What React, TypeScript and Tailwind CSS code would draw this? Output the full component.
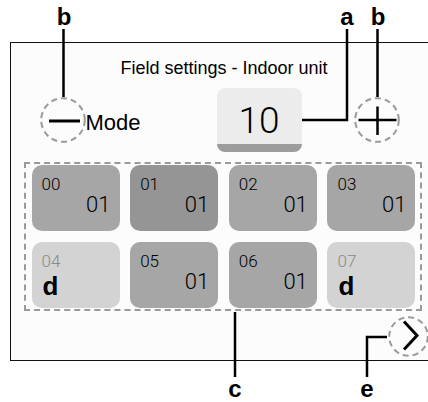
import React from "react";

const tiles = [
  { id: "00", value: "01", bg: "bg-[#a6a6a6]", d: false },
  { id: "01", value: "01", bg: "bg-[#959595]", d: false },
  { id: "02", value: "01", bg: "bg-[#a6a6a6]", d: false },
  { id: "03", value: "01", bg: "bg-[#a6a6a6]", d: false },
  { id: "04", value: "d", bg: "bg-[#d3d3d3]", d: true },
  { id: "05", value: "01", bg: "bg-[#a6a6a6]", d: false },
  { id: "06", value: "01", bg: "bg-[#a6a6a6]", d: false },
  { id: "07", value: "d", bg: "bg-[#d3d3d3]", d: true },
];

function Tile({ id, value, bg, d }: { id: string; value: string; bg: string; d: boolean }) {
  return (
    <div className={`h-[66px] rounded-[10px] ${bg} flex flex-col pt-[11px] pl-[10px] pr-[9px]`}>
      <div
        className={`text-[17px] leading-[17px] font-light font-['Roboto',sans-serif] ${d ? "text-[#8a8a8a]" : "text-black"}`}
      >
        {id}
      </div>
      {d ? (
        <div className="mt-[2.6px] pl-px text-[26px] leading-[26px] font-bold text-black font-['Liberation_Sans',Arial,sans-serif]">
          d
        </div>
      ) : (
        <div className="mt-px text-right text-[22px] leading-[22px] font-light text-black font-['Roboto',sans-serif]">
          {value}
        </div>
      )}
    </div>
  );
}

function DashedCircle({ size, children }: { size: number; children?: React.ReactNode }) {
  const r = size / 2 - 1.2;
  return (
    <svg width={size} height={size} viewBox={`0 0 ${size} ${size}`} className="shrink-0 block">
      <circle cx={size / 2} cy={size / 2} r={r} fill="none" stroke="#9a9a9a" strokeWidth="2" strokeDasharray="6 4" />
      {children}
    </svg>
  );
}

export default function App() {
  return (
    <div className="relative w-[428px] h-[402px] overflow-hidden bg-white font-['Liberation_Sans',Arial,sans-serif] text-black">
      <div className="pt-[42px] pl-[10px]">
        <div className="w-[428px] h-[319px] border-[1.5px] border-[#111] bg-[#fcfcfc] flex flex-col">
          <div className="mt-[14.7px] text-center text-[18px] leading-[21px]">Field settings - Indoor unit</div>

          <div className="mt-[9.8px] flex items-center h-[64px] pl-[28.5px]">
            <DashedCircle size={46}>
              <line x1="9" y1="24" x2="40" y2="24" stroke="#000" strokeWidth="3" />
            </DashedCircle>
            <span className="w-[131px] mt-[5px] text-[22px] leading-[22px]">Mode</span>
            <div className="w-[85px] h-[64px] shrink-0 rounded-[8px] bg-[linear-gradient(to_bottom,#ececec_56px,#9c9c9c_56px)] flex items-center justify-center">
              <span className="text-[37px] leading-[37px] font-['Roboto',sans-serif] font-light">10</span>
            </div>
            <div className="w-[52px] shrink-0" />
            <DashedCircle size={46}>
              <line x1="4.5" y1="23" x2="42.5" y2="23" stroke="#000" strokeWidth="2.5" />
              <line x1="23.5" y1="9.5" x2="23.5" y2="38" stroke="#000" strokeWidth="2.5" />
            </DashedCircle>
          </div>

          <div className="mt-[10px] ml-[12.5px] w-[398px] h-[149px] border-2 border-dashed border-[#9a9a9a] pt-px pl-[6px] grid grid-cols-[repeat(4,88px)] gap-x-[10.67px] gap-y-[11px] content-start">
            {tiles.map((t) => (
              <Tile key={t.id} {...t} />
            ))}
          </div>

          <div className="mt-[5px] flex justify-end pr-[8.5px]">
            <DashedCircle size={41}>
              <polyline points="16,5.5 29,19.5 16,33.5" fill="none" stroke="#000" strokeWidth="3" strokeLinejoin="miter" />
            </DashedCircle>
          </div>
        </div>
      </div>

      <svg className="absolute inset-0 pointer-events-none" width="428" height="402" viewBox="0 0 428 402">
        <g stroke="#000" strokeWidth="2.5" fill="none">
          <line x1="63.5" y1="29" x2="63.5" y2="97" />
          <polyline points="302,120 347,120 347,29" />
          <line x1="377.5" y1="29" x2="377.5" y2="97" />
          <line x1="235" y1="312" x2="235" y2="377" />
          <polyline points="387,337 367,337 367,377" />
        </g>
      </svg>

      <span className="absolute left-[44px] top-[4.7px] w-[40px] text-center text-[24px] leading-[24px] font-bold">b</span>
      <span className="absolute left-[327px] top-[4.7px] w-[40px] text-center text-[24px] leading-[24px] font-bold">a</span>
      <span className="absolute left-[358px] top-[4.7px] w-[40px] text-center text-[24px] leading-[24px] font-bold">b</span>
      <span className="absolute left-[215px] top-[376.7px] w-[40px] text-center text-[24px] leading-[24px] font-bold">c</span>
      <span className="absolute left-[347px] top-[376.7px] w-[40px] text-center text-[24px] leading-[24px] font-bold">e</span>
    </div>
  );
}
